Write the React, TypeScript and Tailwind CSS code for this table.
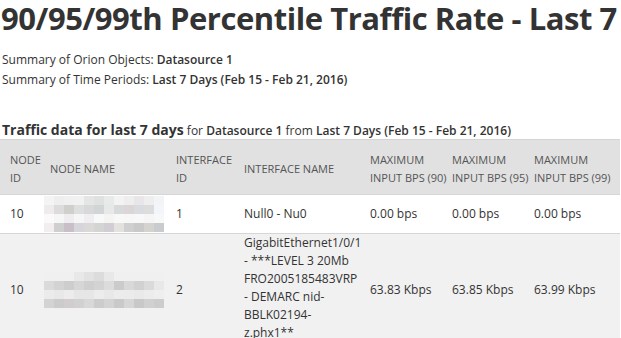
import React from 'react';

const blur1 = [
  ['#f4f4f4', '#eeeeee', '#f0f0f0', '#f1f1f1', '#e4e6e6', '#dfe1e0', '#e8e9e9', '#f3f3f3', '#eeeeee', '#e9e6ea', '#eeeeee', '#f3f4f6'],
  ['#efeaec', '#dcdcdc', '#d0cfcc', '#dcdfde', '#d6d9d8', '#d2d5d6', '#e9e8e9', '#d8d9db', '#dcd5d6', '#d9dbde', '#dcdcdc', '#f2f6fa'],
  ['#fbfafa', '#f6f6f6', '#f0edf0', '#f6f6f6', '#f0eef1', '#f8f8f8', '#f4f4f2', '#f8f8f8', '#f7f7f7', '#f8f8f8', '#f5f5f5', '#f8f8f8'],
  ['#f3eeee', '#cfcfcf', '#c9bfc9', '#d6d6da', '#dbd9d8', '#d3d5d3', '#d2ccd5', '#e3e2df', '#cfcfcf', '#c9c9c9', '#d4d3cf', '#c9cccf'],
];

const blur2 = [
  ['#f0f0f0', '#f0f0f0', '#f0f0f0', '#e8e8e8', '#e2e2e2', '#dcdcdc', '#e8e8e8', '#f0f0f0', '#f0f0f0', '#f0f0f0', '#f0f0f0', '#f0f0f0'],
  ['#dadada', '#d3d3d3', '#cdcdcd', '#d6d6d6', '#cfcfcf', '#d3d3d3', '#dcdcdc', '#cbcbcb', '#d8d8d8', '#d1d1d1', '#dadada', '#e8e8e8'],
  ['#ebebeb', '#e8e8e8', '#ececec', '#e6e6e6', '#e6e6e6', '#ececec', '#e8e8e8', '#ececec', '#ebebeb', '#e9e9e9', '#ececec', '#eeeeee'],
  ['#d3d3d3', '#cbcbcb', '#d0ccd0', '#d1d1d1', '#d8d8d8', '#cccccc', '#d3d3d3', '#c9c9c9', '#d6d6d6', '#c8c8c8', '#d0d0d0', '#cccccc'],
];

const Blur = ({ cells }: { cells: string[][] }) => (
  <div className="flex flex-col w-[120px]">
    {cells.map((row, i) => (
      <div key={i} className="flex h-[9px]">
        {row.map((c, j) => (
          <div key={j} className="w-[10px] h-full" style={{ background: c }} />
        ))}
      </div>
    ))}
  </div>
);

const th = 'font-normal text-left align-middle pl-[10px] pt-[3px] whitespace-nowrap';
const td = 'pl-[10px] align-middle whitespace-nowrap';

const App: React.FC = () => {
  return (
    <div className="w-[621px] h-[338px] overflow-hidden bg-white text-[#333] font-['Open_Sans',sans-serif]">
      <h1 className="whitespace-nowrap text-[31px] leading-[36px] font-bold pl-[1px] tracking-[-0.45px]">
        90/95/99th Percentile Traffic Rate - Last 7 Days
      </h1>
      <div className="mt-[14px] pl-[2px] text-[12px] leading-[20px]">
        <div>
          Summary of Orion Objects: <b className="font-semibold">Datasource 1</b>
        </div>
        <div>
          Summary of Time Periods: <b className="font-semibold">Last 7 Days (Feb 15 - Feb 21, 2016)</b>
        </div>
      </div>
      <div className="mt-[31px] pl-[2px] whitespace-nowrap leading-[16px]">
        <span className="text-[14px] font-bold">Traffic data for last 7 days</span>
        <span className="text-[12px]">
          {' '}for <b className="font-semibold">Datasource 1</b> from{' '}
          <b className="font-semibold">Last 7 Days (Feb 15 - Feb 21, 2016)</b>
        </span>
      </div>
      <table className="table-fixed w-[620px] border-collapse text-[12px] leading-[18px]">
        <colgroup>
          <col className="w-[40px]" />
          <col className="w-[126px]" />
          <col className="w-[68px]" />
          <col className="w-[126px]" />
          <col className="w-[82px]" />
          <col className="w-[82px]" />
          <col className="w-[96px]" />
        </colgroup>
        <thead>
          <tr className="bg-[#e1e1e1] text-[11px] text-[#555] uppercase h-[55px] border-t border-[#d4d4d4]">
            <th className={th}>Node<br />ID</th>
            <th className={th}>Node Name</th>
            <th className={th}>Interface<br />ID</th>
            <th className={th}>Interface Name</th>
            <th className={th}>Maximum<br />Input BPS (90)</th>
            <th className={th}>Maximum<br />Input BPS (95)</th>
            <th className={th}>Maximum<br />Input BPS (99)</th>
          </tr>
        </thead>
        <tbody>
          <tr className="bg-white h-[39px] border-t border-[#d6d6d6]">
            <td className={td}>10</td>
            <td className="pl-[4px] align-middle">
              <Blur cells={blur1} />
            </td>
            <td className={td}>1</td>
            <td className={td}>Null0 - Nu0</td>
            <td className={td}>0.00 bps</td>
            <td className={td}>0.00 bps</td>
            <td className={td}>0.00 bps</td>
          </tr>
          <tr className="bg-[#f1f1f1] border-t border-[#d6d6d6]">
            <td className={td}>10</td>
            <td className="pl-[4px] align-middle">
              <Blur cells={blur2} />
            </td>
            <td className={td}>2</td>
            <td className="pl-[10px] pt-0 pb-[4px] align-middle whitespace-nowrap">
              GigabitEthernet1/0/1
              <br />- ***LEVEL 3 20Mb
              <br />FRO2005185483VRP
              <br />- DEMARC nid-
              <br />BBLK02194-
              <br />z.phx1**
            </td>
            <td className={td}>63.83 Kbps</td>
            <td className={td}>63.85 Kbps</td>
            <td className={td}>63.99 Kbps</td>
          </tr>
        </tbody>
      </table>
    </div>
  );
};

export default App;
